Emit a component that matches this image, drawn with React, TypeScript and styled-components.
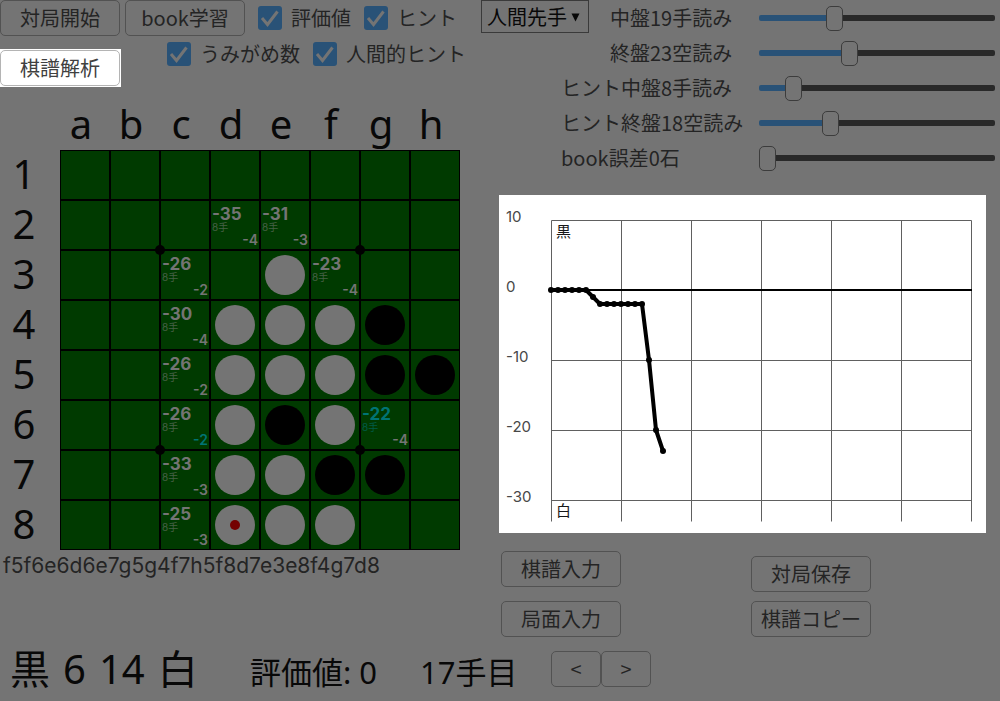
import React, { useState } from "react";
import styled, { createGlobalStyle, css } from "styled-components";

const ui = `"Noto Sans CJK JP", sans-serif`;
const game = `Inter, "Noto Sans CJK JP", sans-serif`;

const GlobalStyle = createGlobalStyle`
  * { box-sizing: border-box; }
  body {
    margin: 0;
    background: #747474;
    color: #242424;
    font-family: ${ui};
    font-size: 20px;
    line-height: 30px;
  }
`;

const Page = styled.main`
  min-height: 100vh;
`;

const Columns = styled.div`
  display: grid;
  grid-template-columns: 481px minmax(0, 1fr);
`;

const Left = styled.section`
  display: flex;
  flex-direction: column;
`;

const Right = styled.section`
  display: flex;
  flex-direction: column;
`;

const Button = styled.button<{ $small?: boolean; $lit?: boolean }>`
  width: ${(p) => (p.$small ? 50 : 120)}px;
  height: 36px;
  padding: 0;
  border: 1px solid ${(p) => (p.$lit ? "#b4b4b4" : "#525252")};
  border-radius: 5px;
  background: ${(p) => (p.$lit ? "#ffffff" : "#747474")};
  color: ${(p) => (p.$lit ? "#404040" : "#242424")};
  font-family: ${ui};
  font-size: 20px;
  line-height: 34px;
  white-space: nowrap;
`;

const Toolbar = styled.div`
  display: flex;
  gap: 4px;
  height: 107px;
`;

const MainActions = styled.div`
  display: flex;
  flex-direction: column;
  align-items: flex-start;
  gap: 13px;
`;

const Spotlight = styled.div`
  display: flex;
  padding: 1px 1px 1px 0;
  background: #ffffff;
`;

const Options = styled.div`
  display: flex;
  flex-direction: column;
`;

const OptionRow = styled.div<{ $indent?: boolean }>`
  display: flex;
  align-items: center;
  gap: 13px;
  height: 36px;
  padding-left: ${(p) => (p.$indent ? 42 : 0)}px;
`;

const CheckLabel = styled.label`
  display: flex;
  align-items: center;
  gap: 9px;
  white-space: nowrap;
`;

const CheckBox = styled.span`
  position: relative;
  display: flex;
  width: 24px;
  height: 24px;
`;

const CheckInput = styled.input`
  appearance: none;
  width: 24px;
  height: 24px;
  margin: 0;
  border-radius: 3px;
  background: #4c4c4c;
  &:checked { background: #295277; }
`;

const CheckMark = styled.svg`
  position: absolute;
  inset: 0;
  pointer-events: none;
`;

const FileLetters = styled.div`
  display: grid;
  grid-template-columns: repeat(8, 50px);
  height: 43px;
  margin-left: 56px;
  color: #080808;
  font-family: "Noto Sans", sans-serif;
  font-size: 40px;
  line-height: 34px;
  text-align: center;
`;

const BoardArea = styled.div`
  display: flex;
`;

const RankNumbers = styled.div`
  display: grid;
  grid-template-rows: repeat(8, 50px);
  width: 60px;
  padding-right: 12px;
  color: #080808;
  font-family: "Noto Sans", sans-serif;
  font-size: 40px;
  line-height: 48px;
  text-align: center;
`;

const Board = styled.div`
  position: relative;
  display: grid;
  grid-template-columns: repeat(8, 48px);
  grid-auto-rows: 48px;
  gap: 2px;
  padding: 1px;
  background: #000000;
`;

const Cell = styled.div`
  display: flex;
  align-items: center;
  justify-content: center;
  background: #003a00;
`;

const Disc = styled.span<{ $black?: boolean }>`
  display: flex;
  align-items: center;
  justify-content: center;
  width: 40px;
  height: 40px;
  border-radius: 50%;
  background: ${(p) => (p.$black ? "#000000" : "#747474")};
`;

const LastMove = styled.span`
  width: 10px;
  height: 10px;
  border-radius: 50%;
  background: #740000;
`;

const StarPoint = styled.span<{ $x: number; $y: number }>`
  position: absolute;
  left: ${(p) => p.$x}%;
  top: ${(p) => p.$y}%;
  width: 10px;
  height: 10px;
  border-radius: 50%;
  background: #000000;
  transform: translate(-50%, -50%);
`;

const Hint = styled.div`
  display: flex;
  flex-direction: column;
  width: 100%;
  height: 100%;
  padding: 4px 1px 0 1px;
  font-family: ${game};
  font-weight: 600;
`;

const hintColor = css<{ $best?: boolean }>`
  color: ${(p) => (p.$best ? "#007474" : "#747474")};
`;

const HintValue = styled.span<{ $best?: boolean }>`
  ${hintColor}
  font-size: 17px;
  font-weight: 700;
  line-height: 18px;
`;

const HintDepth = styled.span<{ $best?: boolean }>`
  color: ${(p) => (p.$best ? "#005a48" : "#466046")};
  font-size: 10px;
  font-weight: 400;
  line-height: 8px;
`;

const HintHuman = styled.span<{ $best?: boolean }>`
  ${hintColor}
  align-self: flex-end;
  font-size: 14px;
  line-height: 18px;
`;

const Record = styled.p`
  margin: 0;
  padding: 1px 3px;
  font-family: ${game};
  font-size: 21px;
`;

const SettingRow = styled.div`
  display: flex;
  align-items: center;
  justify-content: flex-end;
  height: 35px;
  padding-right: 5px;
`;

const SettingLabel = styled.label<{ $short?: boolean }>`
  flex: none;
  width: ${(p) => (p.$short ? 149 : 198)}px;
  white-space: nowrap;
`;

const Range = styled.input`
  appearance: none;
  flex: none;
  width: calc(100% - 278px);
  height: 26px;
  margin: 0;
  background: transparent;

  &::-webkit-slider-runnable-track {
    height: 6px;
    border-radius: 2px;
    background: linear-gradient(to right, #295277 var(--fill), #292929 var(--fill));
  }
  &::-webkit-slider-thumb {
    appearance: none;
    width: 17px;
    height: 25px;
    margin-top: -9px;
    border: 1px solid #3c3c3c;
    border-radius: 5px;
    background: #747474;
  }
`;

const TurnPicker = styled.div`
  position: relative;
  align-self: flex-start;
  margin-right: auto;
`;

const TurnSelect = styled.select`
  appearance: none;
  display: block;
  width: 108px;
  height: 33px;
  padding: 0 5px;
  border: 1px solid #3a3a3a;
  border-radius: 0;
  background: #747474;
  color: #080808;
  font-family: ${ui};
  font-size: 20px;
`;

const SelectArrow = styled.svg`
  position: absolute;
  right: 9px;
  top: 13px;
  pointer-events: none;
`;

const Settings = styled.div`
  height: 195px;
`;

const GraphPanel = styled.figure`
  margin: 0 14px 18px 18px;
  background: #ffffff;
`;

const Graph = styled.svg`
  display: block;
  width: 100%;
  height: auto;
  font-family: ${game};
  font-size: 15px;
`;

const RecordActions = styled.div`
  display: grid;
  grid-template-columns: 250px 120px;
  padding-left: 20px;
`;

const ActionStack = styled.div<{ $tight?: boolean }>`
  display: flex;
  flex-direction: column;
  justify-content: flex-end;
  gap: ${(p) => (p.$tight ? 9 : 14)}px;
`;

const Footer = styled.footer`
  display: flex;
  align-items: center;
  height: 64px;
  padding-left: 10px;
  color: #080808;
  font-family: "Noto Sans", "Noto Sans CJK JP", sans-serif;
  white-space: nowrap;
`;

const Score = styled.div`
  display: flex;
  gap: 13px;
  width: 240px;
  font-size: 40px;
  line-height: 48px;
`;

const Info = styled.div<{ $wide?: boolean }>`
  width: ${(p) => (p.$wide ? 170 : 131)}px;
  font-size: 31px;
  line-height: 48px;
  padding-top: 5px;
`;

const Stepper = styled.div`
  display: flex;
  padding-bottom: 1px;
`;

function Check({ label }: { label: string }) {
  const [on, setOn] = useState(true);
  return (
    <CheckLabel>
      <CheckBox>
        <CheckInput type="checkbox" checked={on} onChange={() => setOn(!on)} />
        {on && (
          <CheckMark viewBox="0 0 24 24" aria-hidden="true">
            <path d="M4 12 L9.5 18.5 L19.5 5.5" fill="none" stroke="#747474" strokeWidth="3" />
          </CheckMark>
        )}
      </CheckBox>
      {label}
    </CheckLabel>
  );
}

type SettingProps = {
  id: string;
  before: string;
  after: string;
  initial: number;
  min?: number;
  short?: boolean;
  children?: React.ReactNode;
};

function Setting({ id, before, after, initial, min = 1, short, children }: SettingProps) {
  const [value, setValue] = useState(initial);
  const fill = `${((value - min) / (60 - min)) * 100}%`;
  return (
    <SettingRow>
      {children}
      <SettingLabel htmlFor={id} $short={short}>{`${before}${value}${after}`}</SettingLabel>
      <Range
        id={id}
        type="range"
        min={min}
        max={60}
        value={value}
        onChange={(e) => setValue(Number(e.target.value))}
        style={{ "--fill": fill } as React.CSSProperties}
      />
    </SettingRow>
  );
}

const position = [
  "........",
  "........",
  "....W...",
  "...WWWB.",
  "...WWWBB",
  "...WBW..",
  "...WWBB.",
  "...WWW..",
];

type HintData = { value: number; human: number; best?: boolean; bestHuman?: boolean };

const hints: Record<string, HintData> = {
  d2: { value: -35, human: -4 },
  e2: { value: -31, human: -3 },
  c3: { value: -26, human: -2 },
  f3: { value: -23, human: -4 },
  c4: { value: -30, human: -4 },
  c5: { value: -26, human: -2 },
  c6: { value: -26, human: -2, bestHuman: true },
  g6: { value: -22, human: -4, best: true },
  c7: { value: -33, human: -3 },
  c8: { value: -25, human: -3 },
};

const files = "abcdefgh".split("");
const lastMove = "d8";

function Square({ name, disc }: { name: string; disc: string }) {
  const hint = hints[name];
  return (
    <Cell>
      {disc !== "." && <Disc $black={disc === "B"}>{name === lastMove && <LastMove />}</Disc>}
      {hint && (
        <Hint>
          <HintValue $best={hint.best}>{hint.value}</HintValue>
          <HintDepth $best={hint.best}>8手</HintDepth>
          <HintHuman $best={hint.bestHuman}>{hint.human}</HintHuman>
        </Hint>
      )}
    </Cell>
  );
}

const evaluations = [0, 0, 0, 0, 0, 0, -1, -2, -2, -2, -2, -2, -2, -2, -10, -20, -23];
const gx = (move: number) => 52 + move * 7;
const gy = (value: number) => 95 - value * 7;

function EvaluationGraph() {
  return (
    <Graph viewBox="0 0 487 338" role="img" aria-label="評価値グラフ">
      <g stroke="#606060" strokeWidth="1" transform="translate(0.5 0.5)">
        {[10, -10, -20, -30].map((v) => (
          <line key={v} x1={gx(0)} x2={gx(60)} y1={gy(v)} y2={gy(v)} />
        ))}
        {[0, 10, 20, 30, 40, 50, 60].map((m) => (
          <line key={m} x1={gx(m)} x2={gx(m)} y1={gy(10)} y2={gy(-33)} />
        ))}
      </g>
      <line x1={gx(0)} x2={gx(60) + 1} y1={gy(0)} y2={gy(0)} stroke="#000" strokeWidth="2" />
      <g fill="#484848">
        {[10, 0, -10, -20, -30].map((v) => (
          <text key={v} x="7" y={gy(v) + 2}>{v}</text>
        ))}
      </g>
      <g fill="#181818">
        <text x="57" y="42">黒</text>
        <text x="57" y="321">白</text>
      </g>
      <polyline
        points={evaluations.map((v, i) => `${gx(i)},${gy(v)}`).join(" ")}
        fill="none"
        stroke="#000"
        strokeWidth="4"
        strokeLinejoin="round"
      />
      {evaluations.map((v, i) => (
        <circle key={i} cx={gx(i)} cy={gy(v)} r="3" />
      ))}
    </Graph>
  );
}

export default function App() {
  return (
    <Page>
      <GlobalStyle />
      <Columns>
        <Left>
          <Toolbar>
            <MainActions>
              <Button>対局開始</Button>
              <Spotlight>
                <Button $lit>棋譜解析</Button>
              </Spotlight>
            </MainActions>
            <Options>
              <OptionRow>
                <Button>book学習</Button>
                <Check label="評価値" />
                <Check label="ヒント" />
              </OptionRow>
              <OptionRow $indent>
                <Check label="うみがめ数" />
                <Check label="人間的ヒント" />
              </OptionRow>
            </Options>
          </Toolbar>
          <FileLetters>
            {files.map((f) => <span key={f}>{f}</span>)}
          </FileLetters>
          <BoardArea>
            <RankNumbers>
              {position.map((_, r) => <span key={r}>{r + 1}</span>)}
            </RankNumbers>
            <Board>
              {position.map((row, r) =>
                row.split("").map((disc, c) => (
                  <Square key={`${r}${c}`} name={`${files[c]}${r + 1}`} disc={disc} />
                ))
              )}
              <StarPoint $x={25} $y={25} />
              <StarPoint $x={75} $y={25} />
              <StarPoint $x={25} $y={75} />
              <StarPoint $x={75} $y={75} />
            </Board>
          </BoardArea>
          <Record>f5f6e6d6e7g5g4f7h5f8d7e3e8f4g7d8</Record>
        </Left>
        <Right>
          <Settings>
            <Setting id="mid" before="中盤" after="手読み" initial={19} short>
              <TurnPicker>
                <TurnSelect aria-label="手番" defaultValue="human-first">
                  <option value="human-first">人間先手</option>
                  <option value="human-second">人間後手</option>
                </TurnSelect>
                <SelectArrow width="9" height="9" viewBox="0 0 9 9" aria-hidden="true">
                  <path d="M0.5 0.5 H8.5 L4.5 8.5 Z" fill="#080808" />
                </SelectArrow>
              </TurnPicker>
            </Setting>
            <Setting id="end" before="終盤" after="空読み" initial={23} short />
            <Setting id="hint-mid" before="ヒント中盤" after="手読み" initial={8} />
            <Setting id="hint-end" before="ヒント終盤" after="空読み" initial={18} />
            <Setting id="book" before="book誤差" after="石" initial={0} min={0} />
          </Settings>
          <GraphPanel>
            <EvaluationGraph />
          </GraphPanel>
          <RecordActions>
            <ActionStack>
              <Button>棋譜入力</Button>
              <Button>局面入力</Button>
            </ActionStack>
            <ActionStack $tight>
              <Button>対局保存</Button>
              <Button>棋譜コピー</Button>
            </ActionStack>
          </RecordActions>
        </Right>
      </Columns>
      <Footer>
        <Score>
          <span>黒</span>
          <span>6</span>
          <span>14</span>
          <span>白</span>
        </Score>
        <Info $wide>評価値: 0</Info>
        <Info>17手目</Info>
        <Stepper>
          <Button $small>&lt;</Button>
          <Button $small>&gt;</Button>
        </Stepper>
      </Footer>
    </Page>
  );
}
